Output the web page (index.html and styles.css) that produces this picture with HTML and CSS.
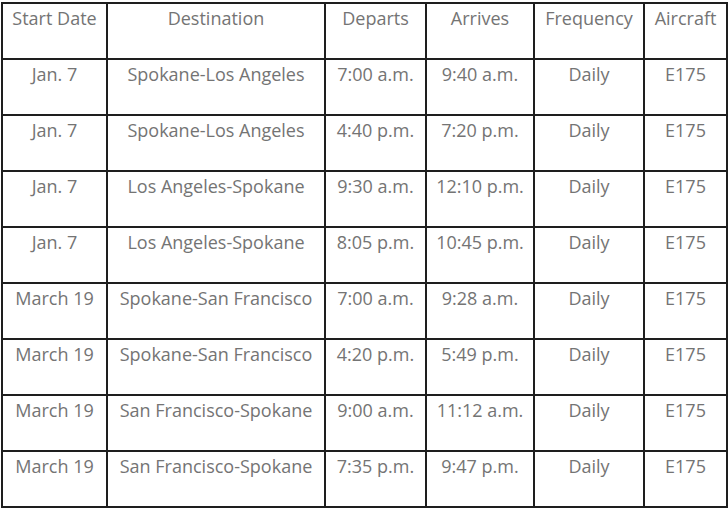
FILE: index.html
```html
<!DOCTYPE html>
<html>
<head>
<meta charset="utf-8">
<link rel="stylesheet" href="styles.css">
</head>
<body>
<table class="schedule">
  <colgroup>
    <col class="c1"><col class="c2"><col class="c3"><col class="c4"><col class="c5"><col class="c6">
  </colgroup>
  <thead>
    <tr><th>Start Date</th><th>Destination</th><th>Departs</th><th>Arrives</th><th>Frequency</th><th>Aircraft</th></tr>
  </thead>
  <tbody>
    <tr><td>Jan. 7</td><td>Spokane-Los Angeles</td><td>7:00 a.m.</td><td>9:40 a.m.</td><td>Daily</td><td>E175</td></tr>
    <tr><td>Jan. 7</td><td>Spokane-Los Angeles</td><td>4:40 p.m.</td><td>7:20 p.m.</td><td>Daily</td><td>E175</td></tr>
    <tr><td>Jan. 7</td><td>Los Angeles-Spokane</td><td>9:30 a.m.</td><td>12:10 p.m.</td><td>Daily</td><td>E175</td></tr>
    <tr><td>Jan. 7</td><td>Los Angeles-Spokane</td><td>8:05 p.m.</td><td>10:45 p.m.</td><td>Daily</td><td>E175</td></tr>
    <tr><td>March 19</td><td>Spokane-San Francisco</td><td>7:00 a.m.</td><td>9:28 a.m.</td><td>Daily</td><td>E175</td></tr>
    <tr><td>March 19</td><td>Spokane-San Francisco</td><td>4:20 p.m.</td><td>5:49 p.m.</td><td>Daily</td><td>E175</td></tr>
    <tr><td>March 19</td><td>San Francisco-Spokane</td><td>9:00 a.m.</td><td>11:12 a.m.</td><td>Daily</td><td>E175</td></tr>
    <tr><td>March 19</td><td>San Francisco-Spokane</td><td>7:35 p.m.</td><td>9:47 p.m.</td><td>Daily</td><td>E175</td></tr>
  </tbody>
</table>
</body>
</html>
```
FILE: styles.css
```css
html, body {
  margin: 0;
  padding: 0;
  background: #ffffff;
}
body {
  padding: 2px 0 0 1px;
}
.schedule {
  border-collapse: collapse;
  table-layout: fixed;
  width: 725px;
  font-family: "Open Sans", "Liberation Sans", sans-serif;
  font-size: 18px;
  color: #747474;
}
.c1 { width: 105px; }
.c2 { width: 218px; }
.c3 { width: 101px; }
.c4 { width: 108px; }
.c5 { width: 110px; }
.c6 { width: 83px; }
.schedule th,
.schedule td {
  border: 2px solid #1e1e1e;
  height: 56px;
  padding: 3px 0 0 0;
  vertical-align: top;
  text-align: center;
  font-weight: normal;
  line-height: 22px;
  white-space: nowrap;
  box-sizing: border-box;
}
```
